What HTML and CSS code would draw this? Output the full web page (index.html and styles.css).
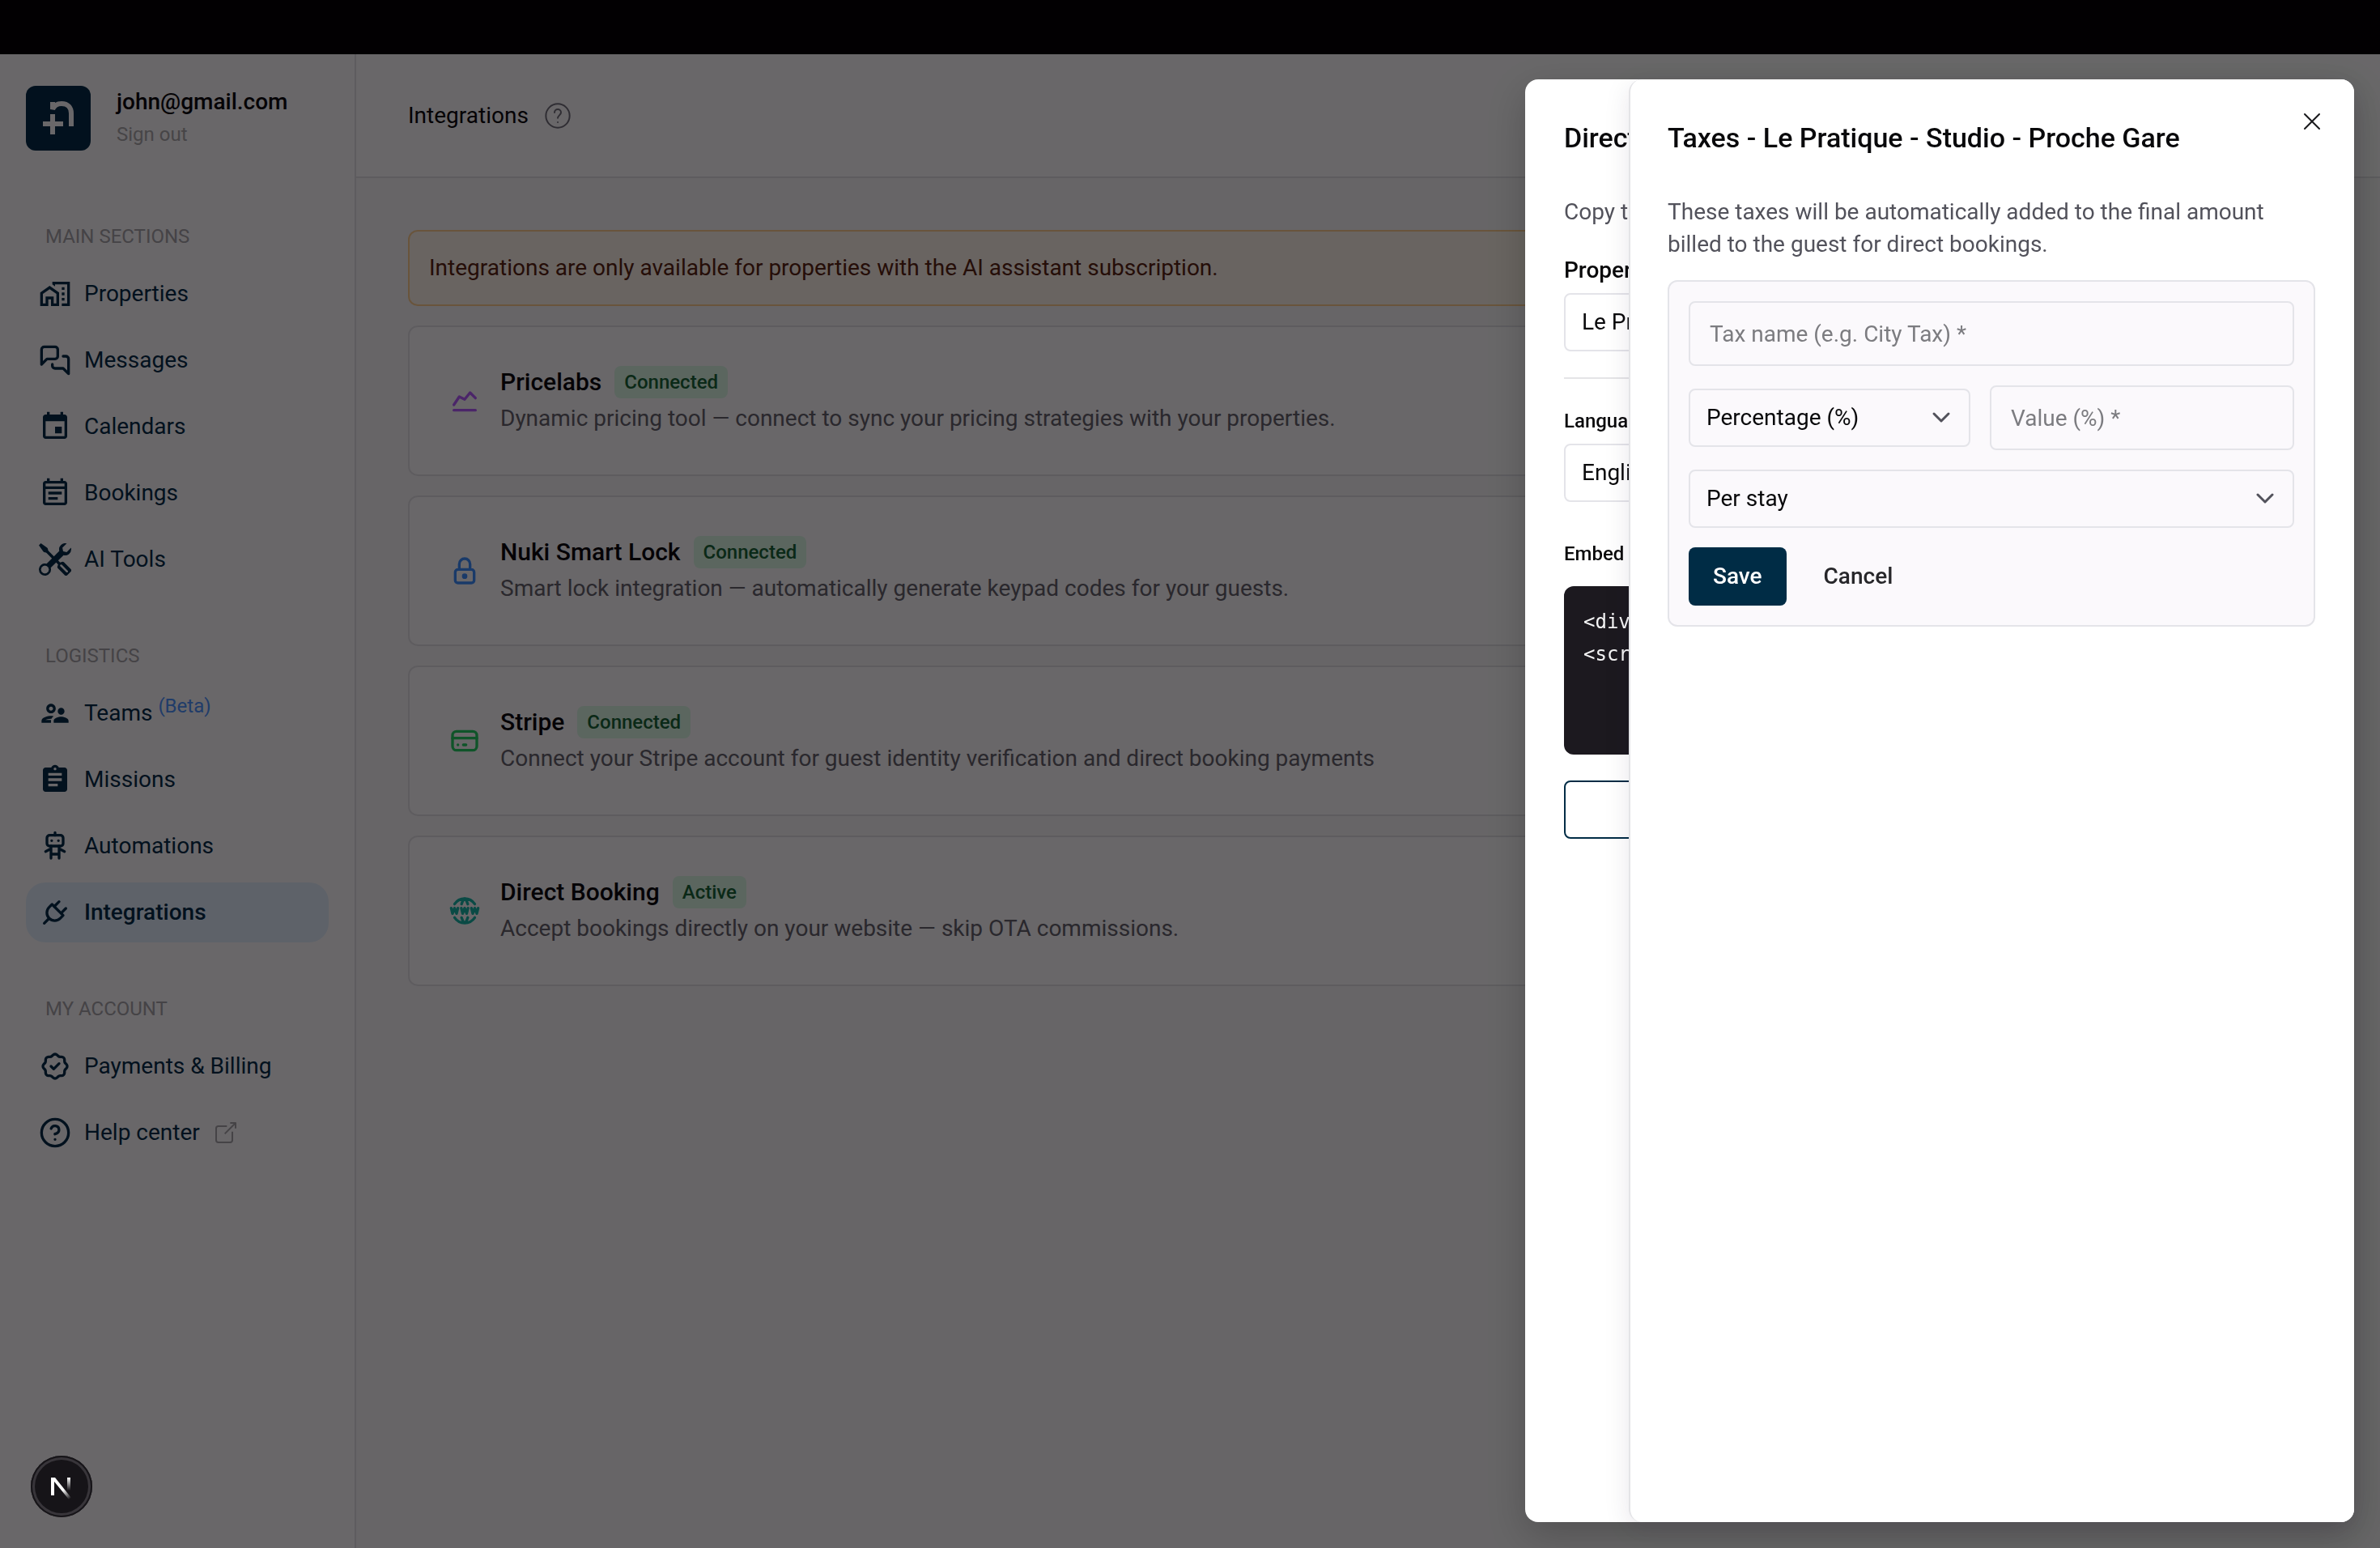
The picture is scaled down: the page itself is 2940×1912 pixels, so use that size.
FILE: index.html
```html
<!DOCTYPE html>
<html lang="en">
<head>
    <meta charset="UTF-8">
    <meta name="viewport" content="width=device-width, initial-scale=1.0">
    <title>Integrations</title>
    <link rel="stylesheet" href="styles.css">
</head>
<body>
    <div class="topbar"></div>
    <div class="app">
        <aside class="sidebar">
            <div class="account">
                <svg class="logo" viewBox="0 0 80 80">
                    <path d="M33 20v9C35 24 39 22 44 22C52 22 56 27 56 34V50" />
                    <path d="M33 35v25M21 47h25" />
                </svg>
                <div>
                    <div class="email">john@gmail.com</div>
                    <a href="#" class="sign-out">Sign out</a>
                </div>
            </div>
            <nav>
                <h2 class="nav-title">MAIN SECTIONS</h2>
                <a href="#" class="nav-item">
                    <svg class="icon fill" viewBox="0 0 24 24"><path d="M17 7h2v2h-2zM17 11h2v2h-2zM17 15h2v2h-2zM1 11v10h6v-5h2v5h6V11L8 6l-7 5zm12 8h-2v-5H5v5H3v-7l5-3.5 5 3.5v7z"/><path d="M10 3v1.97l2 1.43V5h9v14h-4v2h6V3H10z"/></svg>
                    Properties
                </a>
                <a href="#" class="nav-item">
                    <svg class="icon" viewBox="0 0 24 24"><path d="M14 9a2 2 0 0 1-2 2H6l-4 4V4a2 2 0 0 1 2-2h8a2 2 0 0 1 2 2v5Z"/><path d="M18 9h2a2 2 0 0 1 2 2v11l-4-4h-6a2 2 0 0 1-2-2v-1"/></svg>
                    Messages
                </a>
                <a href="#" class="nav-item">
                    <svg class="icon fill" viewBox="0 0 24 24"><path d="M17 12h-5v5h5v-5zM16 1v2H8V1H6v2H5c-1.11 0-1.99.9-1.99 2L3 19c0 1.1.89 2 2 2h14c1.1 0 2-.9 2-2V5c0-1.1-.9-2-2-2h-1V1h-2zm3 18H5V8h14v11z"/></svg>
                    Calendars
                </a>
                <a href="#" class="nav-item">
                    <svg class="icon fill" viewBox="0 0 24 24"><path d="M19 3h-1V1h-2v2H8V1H6v2H5c-1.11 0-2 .9-2 2v14c0 1.1.89 2 2 2h14c1.1 0 2-.9 2-2V5c0-1.1-.9-2-2-2zm0 2v2H5V5h14zM5 19V9h14v10H5zm2-8h10v2H7v-2zm0 4h7v2H7v-2z"/></svg>
                    Bookings
                </a>
                <a href="#" class="nav-item">
                    <svg class="icon fill" viewBox="0 0 16 16"><path d="M1 0L0 1l2.2 3.081a1 1 0 0 0 .815.419h.07a1 1 0 0 1 .708.293l2.675 2.675-2.617 2.654A3.003 3.003 0 0 0 0 13a3 3 0 1 0 5.878-.851l2.654-2.617.968.968-.305.914a1 1 0 0 0 .242 1.023l3.27 3.27a.997.997 0 0 0 1.414 0l1.586-1.586a.997.997 0 0 0 0-1.414l-3.27-3.27a1 1 0 0 0-1.023-.242L10.5 9.5l-.96-.96 2.68-2.643A3.005 3.005 0 0 0 16 3c0-.269-.035-.53-.102-.777l-2.14 2.141L12 4l-.364-1.757L13.777.102a3 3 0 0 0-3.675 3.68L7.462 6.46 4.793 3.793a1 1 0 0 1-.293-.707v-.071a1 1 0 0 0-.419-.814zm9.646 10.646a.5.5 0 0 1 .708 0l2.914 2.915a.5.5 0 0 1-.707.707l-2.915-2.914a.5.5 0 0 1 0-.708M3 11l.471.242.529.026.287.445.445.287.026.529L5 13l-.242.471-.026.529-.445.287-.287.445-.529.026L3 15l-.471-.242L2 14.732l-.287-.445L1.268 14l-.026-.529L1 13l.242-.471.026-.529.445-.287.287-.445.529-.026z"/></svg>
                    AI Tools
                </a>

                <h2 class="nav-title">LOGISTICS</h2>
                <a href="#" class="nav-item">
                    <svg class="icon fill" viewBox="0 0 24 24"><path d="M9 12c1.93 0 3.5-1.57 3.5-3.5S10.93 5 9 5 5.5 6.57 5.5 8.5 7.07 12 9 12zm0-5c.83 0 1.5.67 1.5 1.5S9.83 10 9 10s-1.5-.67-1.5-1.5S8.17 7 9 7zm.05 10H4.77c.99-.5 2.7-1 4.23-1 .11 0 .23.01.34.01.34-.73.93-1.33 1.64-1.81-.73-.13-1.42-.2-1.98-.2-2.34 0-7 1.17-7 3.5V19h7v-1.5c0-.17.02-.34.05-.5zm7.45-2.5c-1.84 0-5.5 1.01-5.5 3V19h11v-1.5c0-1.99-3.66-3-5.5-3zm1.21-1.82c.76-.43 1.29-1.24 1.29-2.18C19 9.12 17.88 8 16.5 8S14 9.12 14 10.5c0 .94.53 1.75 1.29 2.18.36.2.77.32 1.21.32s.85-.12 1.21-.32z"/></svg>
                    <span>Teams <sup class="beta">(Beta)</sup></span>
                </a>
                <a href="#" class="nav-item">
                    <svg class="icon fill" viewBox="0 0 24 24"><path d="M19 3h-4.18C14.4 1.84 13.3 1 12 1c-1.3 0-2.4.84-2.82 2H5c-1.1 0-2 .9-2 2v14c0 1.1.9 2 2 2h14c1.1 0 2-.9 2-2V5c0-1.1-.9-2-2-2zm-7 0c.55 0 1 .45 1 1s-.45 1-1 1-1-.45-1-1 .45-1 1-1zm2 14H7v-2h7v2zm3-4H7v-2h10v2zm0-4H7V7h10v2z"/></svg>
                    Missions
                </a>
                <a href="#" class="nav-item">
                    <svg class="icon" viewBox="0 0 24 24"><rect x="6" y="4" width="12" height="8" rx="2"/><path d="M12 2v2M9 12v9M15 12v9M9 18h6M5 16l4-2M15 14l4 2M9.5 8h.01M14.5 8h.01"/></svg>
                    Automations
                </a>
                <a href="#" class="nav-item active">
                    <svg class="icon" viewBox="0 0 24 24"><path d="M9.785 6l8.215 8.215l-2.054 2.054a5.81 5.81 0 1 1 -8.215 -8.215l2.054 -2.054z"/><path d="M4 20l3.5 -3.5M15 4l-3.5 3.5M20 9l-3.5 3.5"/></svg>
                    Integrations
                </a>

                <h2 class="nav-title">MY ACCOUNT</h2>
                <a href="#" class="nav-item">
                    <svg class="icon" viewBox="0 0 24 24"><path d="M5 7.2a2.2 2.2 0 0 1 2.2 -2.2h1a2.2 2.2 0 0 0 1.55 -.64l.7 -.7a2.2 2.2 0 0 1 3.12 0l.7 .7c.412 .41 .97 .64 1.55 .64h1a2.2 2.2 0 0 1 2.2 2.2v1c0 .58 .23 1.138 .64 1.55l.7 .7a2.2 2.2 0 0 1 0 3.12l-.7 .7a2.2 2.2 0 0 0 -.64 1.55v1a2.2 2.2 0 0 1 -2.2 2.2h-1a2.2 2.2 0 0 0 -1.55 .64l-.7 .7a2.2 2.2 0 0 1 -3.12 0l-.7 -.7a2.2 2.2 0 0 0 -1.55 -.64h-1a2.2 2.2 0 0 1 -2.2 -2.2v-1a2.2 2.2 0 0 0 -.64 -1.55l-.7 -.7a2.2 2.2 0 0 1 0 -3.12l.7 -.7a2.2 2.2 0 0 0 .64 -1.55v-1"/><path d="M9 12l2 2l4 -4"/></svg>
                    Payments &amp; Billing
                </a>
                <a href="#" class="nav-item">
                    <svg class="icon" viewBox="0 0 24 24"><circle cx="12" cy="12" r="10"/><path d="M9.09 9a3 3 0 0 1 5.83 1c0 2-3 3-3 3M12 17h.01"/></svg>
                    Help center
                    <svg class="icon external" viewBox="0 0 24 24"><path d="M18 11v8a2 2 0 0 1-2 2H5a2 2 0 0 1-2-2V8a2 2 0 0 1 2-2h8M16 3h5v5M11 13L21 3"/></svg>
                </a>
            </nav>
        </aside>

        <div class="content">
            <header class="header">
                <h1>Integrations</h1>
                <svg class="icon help" viewBox="0 0 24 24"><circle cx="12" cy="12" r="11"/><path d="M9 9a3 3 0 0 1 6 0c0 2-3 3-3 5M12 18h.01"/></svg>
            </header>
            <main class="main">
                <div class="alert">Integrations are only available for properties with the AI assistant subscription.</div>

                <div class="card">
                    <svg class="icon purple" viewBox="0 0 24 24"><path d="M4 19h16M4 15l4 -6l4 2l4 -5l4 4"/></svg>
                    <div>
                        <div class="card-title">Pricelabs <span class="badge">Connected</span></div>
                        <p>Dynamic pricing tool — connect to sync your pricing strategies with your properties.</p>
                    </div>
                </div>
                <div class="card">
                    <svg class="icon blue" viewBox="0 0 24 24"><path d="M5 13a2 2 0 0 1 2 -2h10a2 2 0 0 1 2 2v6a2 2 0 0 1 -2 2h-10a2 2 0 0 1 -2 -2v-6zM11 16a1 1 0 1 0 2 0a1 1 0 0 0 -2 0M8 11v-4a4 4 0 1 1 8 0v4"/></svg>
                    <div>
                        <div class="card-title">Nuki Smart Lock <span class="badge">Connected</span></div>
                        <p>Smart lock integration — automatically generate keypad codes for your guests.</p>
                    </div>
                </div>
                <div class="card">
                    <svg class="icon green" viewBox="0 0 24 24"><rect x="3" y="5" width="18" height="14" rx="3"/><path d="M3 10h18M7 15h.01M11 15h2"/></svg>
                    <div>
                        <div class="card-title">Stripe <span class="badge">Connected</span></div>
                        <p>Connect your Stripe account for guest identity verification and direct booking payments</p>
                    </div>
                </div>
                <div class="card">
                    <svg class="icon teal" viewBox="0 0 24 24"><path d="M19.5 7a9 9 0 0 0 -7.5 -4a8.991 8.991 0 0 0 -7.484 4M11.5 3a16.989 16.989 0 0 0 -1.826 4M12.5 3a16.989 16.989 0 0 1 1.828 4M19.5 17a9 9 0 0 1 -7.5 4a8.991 8.991 0 0 1 -7.484 -4M11.5 21a16.989 16.989 0 0 1 -1.826 -4M12.5 21a16.989 16.989 0 0 0 1.828 -4M2 10l1 4l1.5 -4l1.5 4l1 -4M17 10l1 4l1.5 -4l1.5 4l1 -4M9.5 10l1 4l1.5 -4l1.5 4l1 -4"/></svg>
                    <div>
                        <div class="card-title">Direct Booking <span class="badge">Active</span></div>
                        <p>Accept bookings directly on your website — skip OTA commissions.</p>
                    </div>
                </div>
            </main>
        </div>
    </div>

    <div class="overlay"></div>

    <section class="panel panel-booking">
        <h2>Direct Booking</h2>
        <p>Copy this code</p>
        <label class="label" for="property">Property</label>
        <div class="select">
            <select id="property"><option>Le Pratique - Studio - Proche Gare</option></select>
        </div>
        <hr>
        <label class="label small" for="language">Language</label>
        <div class="select">
            <select id="language"><option>English</option></select>
        </div>
        <h3 class="label small embed-title">Embed code</h3>
        <pre class="code">&lt;div id="booking"&gt;&lt;/div&gt;
&lt;script src="booking.js"&gt;&lt;/script&gt;</pre>
        <button type="button" class="btn btn-outline">Copy code</button>
    </section>

    <section class="panel panel-taxes">
        <button type="button" class="close" aria-label="Close">
            <svg viewBox="0 0 24 24"><path d="M3 3l18 18M21 3L3 21"/></svg>
        </button>
        <h2>Taxes - Le Pratique - Studio - Proche Gare</h2>
        <p>These taxes will be automatically added to the final amount billed to the guest for direct bookings.</p>
        <form class="tax-form">
            <input type="text" placeholder="Tax name (e.g. City Tax) *" aria-label="Tax name">
            <div class="row">
                <div class="select">
                    <select aria-label="Tax type"><option>Percentage (%)</option></select>
                    <svg class="chevron" viewBox="0 0 24 24"><path d="M3 7l9 9l9 -9"/></svg>
                </div>
                <input type="text" placeholder="Value (%) *" aria-label="Value">
            </div>
            <div class="select">
                <select aria-label="Frequency"><option>Per stay</option></select>
                <svg class="chevron" viewBox="0 0 24 24"><path d="M3 7l9 9l9 -9"/></svg>
            </div>
            <div class="actions">
                <button type="button" class="btn btn-primary">Save</button>
                <button type="button" class="btn btn-ghost">Cancel</button>
            </div>
        </form>
    </section>

    <button type="button" class="dev-badge" aria-label="Dev tools">
        <svg viewBox="0 0 76 76">
            <defs>
                <linearGradient id="fade-diag" gradientUnits="userSpaceOnUse" x1="40" y1="42" x2="49" y2="53">
                    <stop offset="0" stop-color="#fff"/>
                    <stop offset="1" stop-color="#fff" stop-opacity="0"/>
                </linearGradient>
                <linearGradient id="fade-stem" gradientUnits="userSpaceOnUse" x1="0" y1="27" x2="0" y2="43">
                    <stop offset="0" stop-color="#fff"/>
                    <stop offset="1" stop-color="#fff" stop-opacity="0"/>
                </linearGradient>
            </defs>
            <path d="M25 27h4v22h-4z" fill="#fff"/>
            <path d="M25 27h5l20 25l-3 2z" fill="url(#fade-diag)"/>
            <path d="M45 27h4v17h-4z" fill="url(#fade-stem)"/>
        </svg>
    </button>
</body>
</html>
```
FILE: styles.css
```css
* {
    box-sizing: border-box;
}
body {
    margin: 0;
    height: 100vh;
    display: flex;
    flex-direction: column;
    overflow: hidden;
    font-family: Roboto, "Liberation Sans", sans-serif;
    font-size: 28px;
    line-height: 40px;
    color: #09090b;
    background-color: #fff;
}
h1, h2, h3, p {
    margin: 0;
}
a {
    text-decoration: none;
}
button, input, select {
    font: inherit;
    color: inherit;
}
.topbar {
    height: 67px;
    background-color: #000;
    flex-shrink: 0;
}
.app {
    display: flex;
    flex: 1;
}

/* icons */
.icon {
    width: 40px;
    height: 40px;
    flex-shrink: 0;
    fill: none;
    stroke: currentColor;
    stroke-width: 2;
    stroke-linecap: round;
    stroke-linejoin: round;
}
.icon.fill {
    fill: currentColor;
    stroke: none;
}
.purple {
    color: #b45cff;
}
.blue {
    color: #3b90ff;
}
.green {
    color: #22d060;
}
.teal {
    color: #14b8a6;
}

/* sidebar */
.sidebar {
    width: 440px;
    flex-shrink: 0;
    padding: 39px 32px;
    border-right: 2px solid #e4e4e7;
}
.account {
    display: flex;
    gap: 32px;
    margin-bottom: 90px;
}
.logo {
    width: 80px;
    height: 80px;
    border-radius: 12px;
    background-color: #002c45;
    fill: none;
    stroke: #fff;
    stroke-width: 6;
}
.email {
    font-weight: 500;
}
.sign-out {
    display: block;
    font-size: 24px;
    color: #aaa;
}
.nav-title {
    margin: 66px 24px 18px;
    font-size: 24px;
    font-weight: 400;
    line-height: 32px;
    color: #a6a6a9;
}
.nav-title:first-child {
    margin-top: 0;
}
.nav-item {
    display: flex;
    align-items: center;
    gap: 16px;
    height: 74px;
    margin-bottom: 8px;
    padding: 0 16px;
    border-radius: 24px;
    color: #002c45;
}
.nav-item.active {
    background-color: #e4f3ff;
    font-weight: 500;
}
.beta {
    font-size: 24px;
    line-height: 0;
    color: #4a94ff;
}
.icon.external {
    width: 32px;
    height: 32px;
    stroke-width: 1.5;
    stroke-linecap: butt;
    color: #a6a6a9;
}

/* main content */
.content {
    flex: 1;
    display: flex;
    flex-direction: column;
    background-color: #fafafa;
}
.header {
    display: flex;
    align-items: center;
    gap: 20px;
    height: 153px;
    padding: 0 64px;
    border-bottom: 2px solid #e4e4e7;
    background-color: #fff;
}
.header h1 {
    font-size: 28px;
    font-weight: 400;
}
.icon.help {
    width: 32px;
    height: 32px;
    stroke-width: 1.5;
    color: #71717a;
}
.main {
    display: flex;
    flex-direction: column;
    gap: 24px;
    padding: 64px;
}
.alert {
    padding: 25px 24px;
    border: 2px solid #fed08f;
    border-radius: 12px;
    background-color: #fff8ea;
    color: #58230f;
}
.card {
    display: flex;
    align-items: center;
    gap: 24px;
    padding: 48px;
    border: 2px solid #e4e4e7;
    border-radius: 12px;
    background-color: #fff;
}
.card-title {
    display: flex;
    align-items: center;
    gap: 16px;
    margin-bottom: 4px;
    font-size: 30px;
    font-weight: 500;
}
.card p {
    line-height: 42px;
    color: #63636a;
}
.badge {
    padding: 0 12px;
    border-radius: 8px;
    background-color: #dcfce7;
    font-size: 24px;
    color: #166534;
}
.overlay {
    position: fixed;
    inset: 0;
    background-color: rgba(4, 0, 4, 0.596);
}

/* slide-over panels */
.panel {
    position: fixed;
    top: 98px;
    right: 32px;
    bottom: 32px;
    padding: 48px;
    border-radius: 16px;
    background-color: #fff;
}
.panel h2 {
    margin-bottom: 48px;
    font-size: 34px;
    font-weight: 500;
    line-height: 48px;
}
.panel p {
    color: #52525b;
}
.panel-booking {
    width: 1024px;
    box-shadow: 0 16px 48px rgba(0, 0, 0, 0.2);
}
.panel-taxes {
    width: 896px;
    padding-left: 46px;
    border-left: 2px solid #e4e4e7;
    box-shadow: 0 8px 32px rgba(40, 0, 60, 0.1);
}
.label {
    display: block;
    margin: 32px 0 8px;
    font-weight: 500;
}
.label.small {
    margin: 0 0 12px;
    font-size: 24px;
    line-height: 32px;
}
.label.embed-title {
    margin: 48px 0 24px;
}
hr {
    margin: 32px 0 36px;
    border: none;
    border-top: 2px solid #e4e4e7;
}
.code {
    height: 208px;
    margin: 0 0 32px;
    padding: 24px;
    border-radius: 12px;
    background-color: #1c191f;
    font-family: "DejaVu Sans Mono", monospace;
    font-size: 24px;
    color: #f4f4f5;
}
.select {
    position: relative;
}
.select select {
    display: block;
    width: 100%;
    height: 72px;
    padding: 0 20px;
    border: 2px solid #e4e4e9;
    border-radius: 8px;
    background-color: transparent;
    appearance: none;
}
.chevron {
    position: absolute;
    top: 24px;
    right: 24px;
    width: 24px;
    height: 24px;
    fill: none;
    stroke: #52525b;
    stroke-width: 3;
    stroke-linecap: round;
    stroke-linejoin: round;
    pointer-events: none;
}
.tax-form {
    display: flex;
    flex-direction: column;
    gap: 24px;
    margin-top: 24px;
    padding: 24px;
    border: 2px solid #e4e4e9;
    border-radius: 12px;
    background-color: #fbf9fc;
}
.tax-form input {
    width: 100%;
    height: 80px;
    padding: 0 24px;
    border: 2px solid #e4e4e9;
    border-radius: 8px;
    background-color: transparent;
}
.tax-form input::placeholder {
    color: #7c7c80;
    opacity: 1;
}
.row {
    display: grid;
    grid-template-columns: 348px 1fr;
    gap: 24px;
    align-items: center;
}
.actions {
    display: flex;
    gap: 16px;
}
.btn {
    height: 72px;
    padding: 0 30px;
    border: none;
    border-radius: 8px;
    background-color: transparent;
    font-weight: 500;
    cursor: pointer;
}
.btn-primary {
    background-color: #002c45;
    color: #fff;
}
.btn-ghost {
    color: #27272a;
}
.btn-outline {
    width: 100%;
    border: 2px solid #002c45;
    color: #002c45;
}
.close {
    position: absolute;
    top: 40px;
    right: 40px;
    width: 24px;
    height: 24px;
    padding: 0;
    border: none;
    background: none;
    cursor: pointer;
}
.close svg {
    display: block;
    fill: none;
    stroke: #18181b;
    stroke-width: 2;
    stroke-linecap: round;
}
.dev-badge {
    position: fixed;
    left: 38px;
    bottom: 38px;
    width: 76px;
    height: 76px;
    padding: 0;
    border: none;
    border-radius: 50%;
    background-color: #161418;
    box-shadow: inset 0 0 0 2px #161418, inset 0 0 0 5px #38353a;
}
.dev-badge svg {
    display: block;
}
```
